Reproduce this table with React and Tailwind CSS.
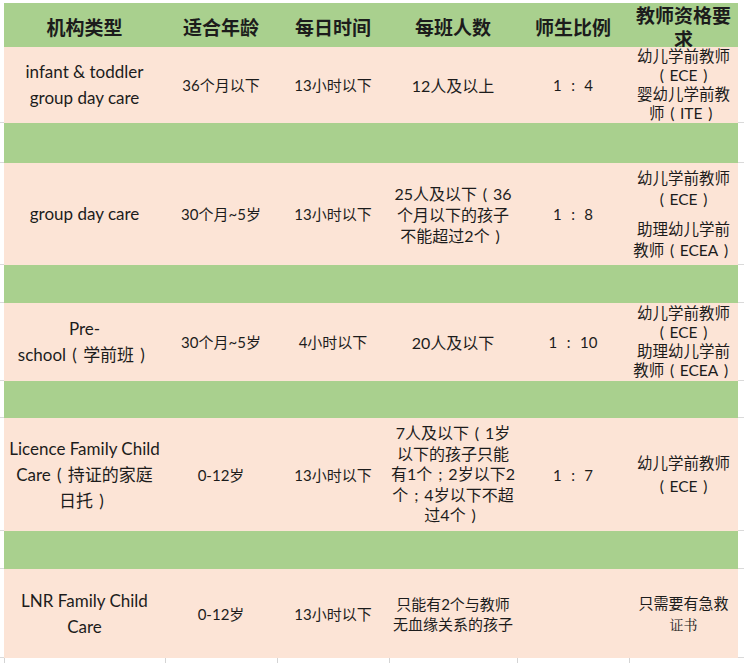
const COLS = "grid grid-cols-[4px_161px_112px_112px_128px_112px_109px_6px]";

// full-width punctuation drawn centred in a 1em box, as the sheet's font does
const FW = { "（": "(", "）": ")", "：": ":", "；": ";" };
function fw(s) {
  return s.split(/([（）：；])/).map((p, i) =>
    FW[p] ? (
      <span key={i} className="inline-block w-[1em] text-center">
        {FW[p]}
      </span>
    ) : (
      p
    )
  );
}

function Lines({ lines, className = "" }) {
  return (
    <div className={`flex flex-col items-center text-center whitespace-nowrap ${className}`}>
      {lines.map((l, i) => (
        <span key={i}>{fw(l)}</span>
      ))}
    </div>
  );
}

function Cell({ children }) {
  return (
    <div className="flex items-center justify-center overflow-visible bg-[#fce4d6] text-[#1c1c1c]">
      {children}
    </div>
  );
}

function Stub() {
  return <div className="bg-white border-b border-[#dadada]" />;
}

function Row({ h, children }) {
  return (
    <div className={`${COLS} ${h}`}>
      <Stub />
      {children}
      <Stub />
    </div>
  );
}

function Sep({ h }) {
  return (
    <div className={`${COLS} ${h}`}>
      <Stub />
      <div className="col-span-6 bg-[#a9d08e]" />
      <Stub />
    </div>
  );
}

const c1 = "text-[17px] leading-[26px]";
const c2 = "text-[15px] leading-[20px]";
const c4 = "text-[16px] leading-[21px]";
const c6 = "text-[15.5px] leading-[19px]";
const head =
  "flex items-center justify-center bg-[#a9d08e] text-[19px] font-bold text-[#1c1c1c] font-[family-name:'Noto_Sans_CJK_SC',sans-serif]";

export default function App() {
  const headers = ["机构类型", "适合年龄", "每日时间", "每班人数", "师生比例"];

  return (
    <div className="w-[744px] h-[663px] overflow-hidden bg-white font-[family-name:Lato,'Noto_Sans_CJK_SC',sans-serif]">
      <div className={`${COLS} h-[3px]`}>
        <div className="col-span-8 bg-white" />
      </div>

      {/* header */}
      <div className={`${COLS} h-[44px]`}>
        <Stub />
        {headers.map((t) => (
          <div key={t} className={head}>
            {t}
          </div>
        ))}
        <div className={head}>
          <Lines lines={["教师资格要", "求"]} className="leading-[24px]" />
        </div>
        <Stub />
      </div>

      <Row h="h-[76px]">
        <Cell><Lines lines={["infant & toddler", "group day care"]} className={c1} /></Cell>
        <Cell><Lines lines={["36个月以下"]} className={c2} /></Cell>
        <Cell><Lines lines={["13小时以下"]} className={c2} /></Cell>
        <Cell><Lines lines={["12人及以上"]} className={c4} /></Cell>
        <Cell><Lines lines={["1 ： 4"]} className={c2} /></Cell>
        <Cell><Lines lines={["幼儿学前教师", "（ECE）", "婴幼儿学前教", "师（ITE）"]} className={c6} /></Cell>
      </Row>

      <Sep h="h-[40px]" />

      <Row h="h-[102px]">
        <Cell><Lines lines={["group day care"]} className={c1} /></Cell>
        <Cell><Lines lines={["30个月~5岁"]} className={c2} /></Cell>
        <Cell><Lines lines={["13小时以下"]} className={c2} /></Cell>
        <Cell><Lines lines={["25人及以下（36", "个月以下的孩子", "不能超过2个）"]} className={c4} /></Cell>
        <Cell><Lines lines={["1 ： 8"]} className={c2} /></Cell>
        <Cell>
          <div className="flex flex-col gap-[9px]">
            <Lines lines={["幼儿学前教师", "（ECE）"]} className="text-[15.5px] leading-[21px]" />
            <Lines lines={["助理幼儿学前", "教师（ECEA）"]} className="text-[15.5px] leading-[21px]" />
          </div>
        </Cell>
      </Row>

      <Sep h="h-[38px]" />

      <Row h="h-[78px]">
        <Cell><Lines lines={["Pre-", "school（学前班）"]} className={c1} /></Cell>
        <Cell><Lines lines={["30个月~5岁"]} className={c2} /></Cell>
        <Cell><Lines lines={["4小时以下"]} className={c2} /></Cell>
        <Cell><Lines lines={["20人及以下"]} className={c4} /></Cell>
        <Cell><Lines lines={["1 ： 10"]} className={c2} /></Cell>
        <Cell><Lines lines={["幼儿学前教师", "（ECE）", "助理幼儿学前", "教师（ECEA）"]} className={c6} /></Cell>
      </Row>

      <Sep h="h-[37px]" />

      <Row h="h-[113px]">
        <Cell><Lines lines={["Licence Family Child", "Care（持证的家庭", "日托）"]} className={c1} /></Cell>
        <Cell><Lines lines={["0-12岁"]} className={c2} /></Cell>
        <Cell><Lines lines={["13小时以下"]} className={c2} /></Cell>
        <Cell>
          <Lines
            lines={["7人及以下（1岁", "以下的孩子只能", "有1个；2岁以下2", "个；4岁以下不超", "过4个）"]}
            className="text-[16px] leading-[20.5px]"
          />
        </Cell>
        <Cell><Lines lines={["1 ： 7"]} className={c2} /></Cell>
        <Cell><Lines lines={["幼儿学前教师", "（ECE）"]} className="text-[15.5px] leading-[23px]" /></Cell>
      </Row>

      <Sep h="h-[38px]" />

      <Row h="h-[89px]">
        <Cell><Lines lines={["LNR Family Child", "Care"]} className={c1} /></Cell>
        <Cell><Lines lines={["0-12岁"]} className={c2} /></Cell>
        <Cell><Lines lines={["13小时以下"]} className={c2} /></Cell>
        <Cell><Lines lines={["只能有2个与教师", "无血缘关系的孩子"]} className={c2} /></Cell>
        <Cell />
        <Cell>
          <div className="flex flex-col items-center">
            <span className="text-[15px] leading-[21px]">只需要有急救</span>
            <span className="text-[14px] leading-[21px] font-[family-name:'Noto_Serif_CJK_SC','Noto_Sans_CJK_SC',serif]">证书</span>
          </div>
        </Cell>
      </Row>

      {/* empty spreadsheet strip below */}
      <div className={`${COLS} h-[5px]`}>
        {[0, 1, 2, 3, 4, 5, 6, 7].map((i) => (
          <div key={i} className={`bg-white ${i > 0 && i < 7 ? "border-l border-[#d4d4d4]" : ""}`} />
        ))}
      </div>
    </div>
  );
}
